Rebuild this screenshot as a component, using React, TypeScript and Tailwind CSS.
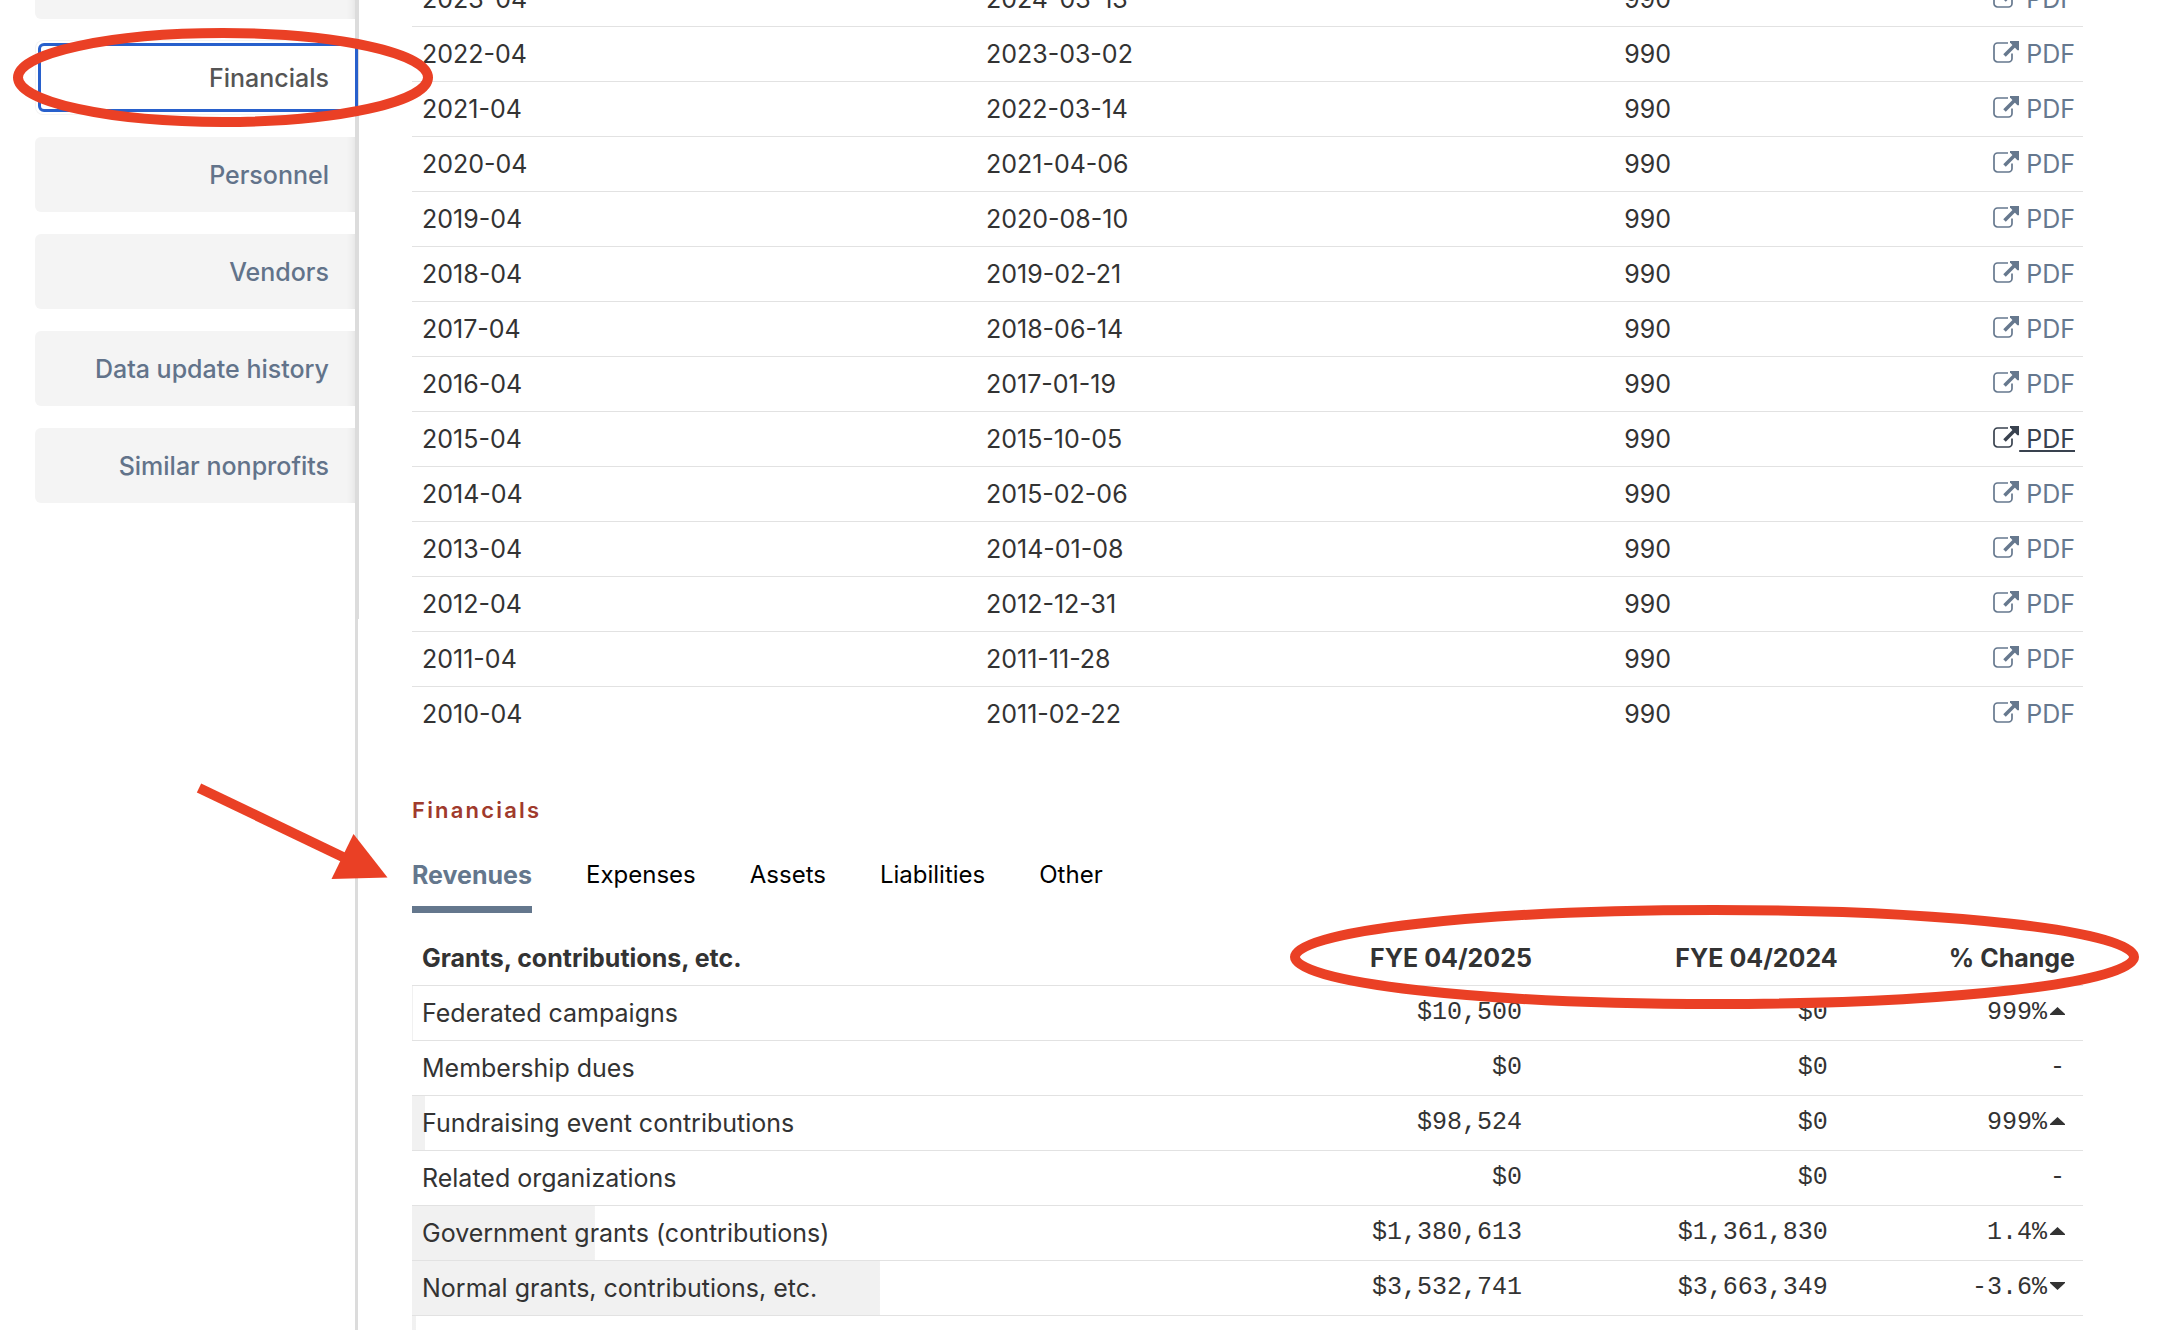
import React from 'react';
import clsx from 'clsx';

interface Filing {
  period: string;
  filed: string;
  form: string;
  hovered?: boolean;
}

interface RevenueRow {
  label: string;
  current: number;
  previous: number;
  change: string;
  trend?: 'up' | 'down';
}

const navItems = ['Financials', 'Personnel', 'Vendors', 'Data update history', 'Similar nonprofits'];

const filings: Filing[] = [
  { period: '2023-04', filed: '2024-03-13', form: '990' },
  { period: '2022-04', filed: '2023-03-02', form: '990' },
  { period: '2021-04', filed: '2022-03-14', form: '990' },
  { period: '2020-04', filed: '2021-04-06', form: '990' },
  { period: '2019-04', filed: '2020-08-10', form: '990' },
  { period: '2018-04', filed: '2019-02-21', form: '990' },
  { period: '2017-04', filed: '2018-06-14', form: '990' },
  { period: '2016-04', filed: '2017-01-19', form: '990' },
  { period: '2015-04', filed: '2015-10-05', form: '990', hovered: true },
  { period: '2014-04', filed: '2015-02-06', form: '990' },
  { period: '2013-04', filed: '2014-01-08', form: '990' },
  { period: '2012-04', filed: '2012-12-31', form: '990' },
  { period: '2011-04', filed: '2011-11-28', form: '990' },
  { period: '2010-04', filed: '2011-02-22', form: '990' },
];

const tabs = ['Revenues', 'Expenses', 'Assets', 'Liabilities', 'Other'];

const revenues: RevenueRow[] = [
  { label: 'Federated campaigns', current: 10500, previous: 0, change: '999%', trend: 'up' },
  { label: 'Membership dues', current: 0, previous: 0, change: '-' },
  { label: 'Fundraising event contributions', current: 98524, previous: 0, change: '999%', trend: 'up' },
  { label: 'Related organizations', current: 0, previous: 0, change: '-' },
  { label: 'Government grants (contributions)', current: 1380613, previous: 1361830, change: '1.4%', trend: 'up' },
  { label: 'Normal grants, contributions, etc.', current: 3532741, previous: 3663349, change: '-3.6%', trend: 'down' },
];

const TOTAL_REVENUE = 12614000;

const formatUsd = (value: number) => '$' + value.toLocaleString('en-US');

// grey bar behind a row, as wide as the row's share of total revenue
const barStyle = (value: number): React.CSSProperties => ({
  backgroundImage: 'linear-gradient(#f1f1f1, #f1f1f1)',
  backgroundRepeat: 'no-repeat',
  backgroundSize: `${(value / TOTAL_REVENUE) * 100}% 100%`,
});

const ExternalIcon = () => (
  <svg className="inline-block align-baseline w-[26px] h-[22px]" viewBox="0 0 26 22" fill="none" aria-hidden="true">
    <path
      d="M15 2H4.5A3.5 3.5 0 0 0 1 5.5v12A3.5 3.5 0 0 0 4.5 21h11a3.5 3.5 0 0 0 3.5-3.5V12.5"
      stroke="currentColor"
      strokeWidth="1.7"
    />
    <path d="M11.5 14.5 22 4" stroke="currentColor" strokeWidth="3.5" />
    <path d="M17 0H26V9.2H24.4L17 1.6Z" fill="currentColor" />
  </svg>
);

const Triangle = ({ trend }: { trend: 'up' | 'down' }) => (
  <svg className="mb-1 w-[15px] h-2" viewBox="0 0 15 8" fill="currentColor" aria-hidden="true">
    {trend === 'up' ? <path d="M7.5 0 15 7V8H0V7Z" /> : <path d="M0 0H15V1L7.5 8 0 1Z" />}
  </svg>
);

const Sidebar = () => (
  <nav className="relative z-10 shrink-0 w-[359px] h-[619px] pl-[35px] border-r-4 border-[#dcdcdc]">
    <div className="h-[19px] rounded-bl-md bg-[#f4f4f4] shadow-[inset_-10px_0_10px_-10px_rgba(0,0,0,0.1)]" />
    <ul className="mt-[21px] flex flex-col gap-[22px] font-medium text-right">
      {navItems.map((item) =>
        item === 'Financials' ? (
          <li key={item} className="h-[75px] pl-[2px] py-[2px] border border-r-0 border-[#f4f4f4] rounded-l-lg bg-white">
            <a
              href="#financials"
              className="-mr-[3px] h-full flex items-center justify-end pr-[26px] border-[3px] border-[#2860cc] rounded-l-md text-[#555]"
            >
              {item}
            </a>
          </li>
        ) : (
          <li key={item} className="h-[75px]">
            <a
              href="#"
              className="h-full flex items-center justify-end pr-[26px] rounded-l-md bg-[#f4f4f4] text-[#62738a] shadow-[inset_-10px_0_10px_-10px_rgba(0,0,0,0.1)]"
            >
              {item}
            </a>
          </li>
        )
      )}
    </ul>
  </nav>
);

const FilingsTable = () => (
  <table className="w-full table-fixed border-separate border-spacing-0">
    <colgroup>
      <col className="w-[33.75%]" />
      <col className="w-[38.2%]" />
      <col />
      <col />
    </colgroup>
    <tbody>
      {filings.map((filing, i) => {
        const cell = clsx(
          'h-[55px] pl-[10px] pr-2 border-b',
          i === filings.length - 1 ? 'border-transparent' : 'border-[#e2e2e2]'
        );
        return (
          <tr key={filing.period}>
            <td className={cell}>{filing.period}</td>
            <td className={cell}>{filing.filed}</td>
            <td className={cell}>{filing.form}</td>
            <td className={clsx(cell, 'text-right')}>
              <a
                href="#"
                className={clsx(
                  'whitespace-nowrap decoration-2 underline-offset-2',
                  filing.hovered ? 'text-[#39424f] underline' : 'text-[#66788e]'
                )}
              >
                <ExternalIcon /> PDF
              </a>
            </td>
          </tr>
        );
      })}
    </tbody>
  </table>
);

const RevenueTable = () => {
  const head = 'h-[55px] pl-[10px] pr-2 border-b border-[#e2e2e2] font-bold';
  const cell = 'h-[55px] pl-[10px] pr-2 border-b border-[#e2e2e2]';
  const num = 'h-[55px] pr-[18px] border-b border-[#e2e2e2] text-right font-["Liberation_Mono",monospace]';

  return (
    <table className="mt-[18px] w-full table-fixed border-separate border-spacing-0">
      <colgroup>
        <col />
        <col className="w-[18.3%]" />
        <col className="w-[18.3%]" />
        <col className="w-[14.2%]" />
      </colgroup>
      <thead>
        <tr>
          <th className={clsx(head, 'text-left')}>Grants, contributions, etc.</th>
          <th className={clsx(head, 'text-right')}>FYE 04/2025</th>
          <th className={clsx(head, 'text-right')}>FYE 04/2024</th>
          <th className={clsx(head, 'text-right')}>% Change</th>
        </tr>
      </thead>
      <tbody>
        {revenues.map((row) => (
          <tr key={row.label} style={barStyle(row.current)}>
            <td className={cell}>{row.label}</td>
            <td className={num}>{formatUsd(row.current)}</td>
            <td className={num}>{formatUsd(row.previous)}</td>
            <td className={num}>
              <div className="flex items-center justify-end gap-[3px]">
                {row.change}
                {row.trend && <Triangle trend={row.trend} />}
              </div>
            </td>
          </tr>
        ))}
        <tr style={barStyle(30000)}>
          <td className={cell} colSpan={4} />
        </tr>
      </tbody>
    </table>
  );
};

// red callouts lying over the page
const Annotations = () => (
  <svg
    className="absolute inset-0 z-20 w-full h-full pointer-events-none"
    viewBox="0 0 2160 1330"
    fill="none"
    stroke="#ea4025"
    strokeWidth="10"
    aria-hidden="true"
  >
    <ellipse cx="223" cy="77.5" rx="205" ry="44.5" />
    <ellipse cx="1714.5" cy="957" rx="419.5" ry="47" />
    <path d="M199 788 345 858" />
    <path d="M387.5 877.5 353.5 834 331.5 879Z" fill="#ea4025" stroke="none" />
  </svg>
);

export default function App() {
  return (
    <div className='relative h-screen overflow-hidden flex items-start bg-white text-[#333] text-[25px] leading-[30px] font-["Inter",sans-serif]'>
      <Sidebar />
      <main className="-ml-1 flex-1 min-w-0 border-l-3 border-[#dcdcdc] pl-[54px] pr-[77px]">
        <div className="-mt-7">
          <FilingsTable />
          <h2 id="financials" className="mt-[52px] text-[22px] leading-8 font-semibold tracking-widest text-[#a03a2c]">
            Financials
          </h2>
          <div role="tablist" className="mt-[34px] flex gap-[54px]">
            {tabs.map((tab, i) => (
              <button
                key={tab}
                role="tab"
                aria-selected={i === 0}
                className={clsx(
                  'pb-4 border-b-7',
                  i === 0 ? 'border-[#64778d] font-bold text-[#64778d]' : 'border-transparent text-[24px] text-black'
                )}
              >
                {tab}
              </button>
            ))}
          </div>
          <RevenueTable />
        </div>
      </main>
      <Annotations />
    </div>
  );
}
